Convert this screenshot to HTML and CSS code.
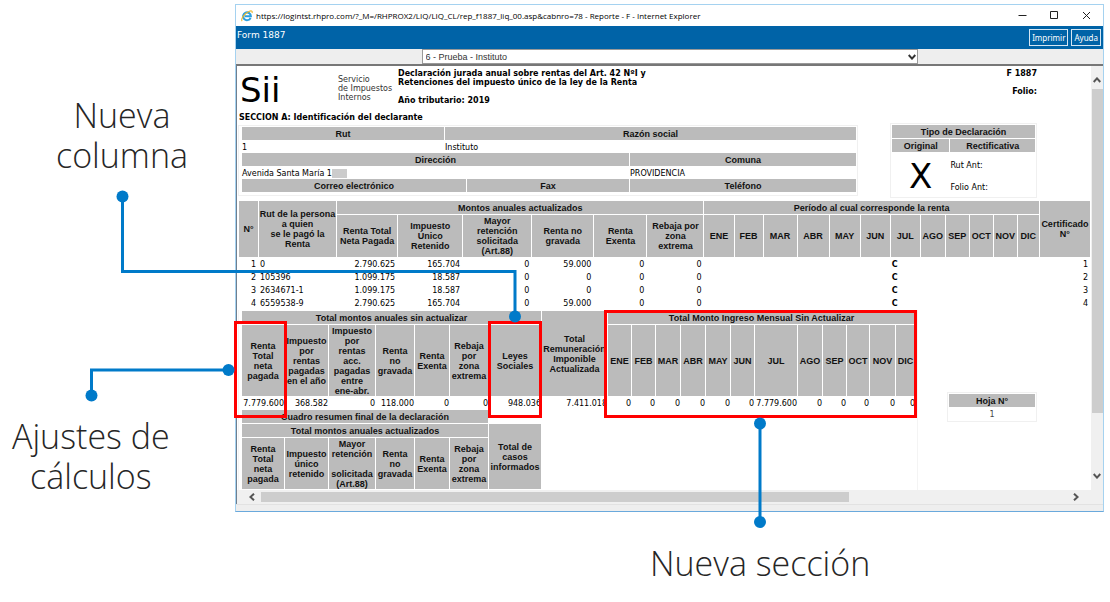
FILE: index.html
```
<!DOCTYPE html>
<html lang="es">
<head>
<meta charset="utf-8">
<title>Form 1887 - Reporte</title>
<link rel="stylesheet" href="styles.css">
</head>
<body>
<main class="stage">
  <section class="window">
    <header class="titlebar">
      <svg class="ie" viewBox="0 0 12 12" aria-hidden="true">
        <path d="M9.6 7.8A3.9 3.9 0 1 1 9.9 6.3H3.6" fill="none" stroke="#2b9fe0" stroke-width="2"/>
        <path d="M1.2 11C-.6 9.600 3.200 3.400 8.400 1.300 10.600.4 11.700 1.100 11 3" fill="none" stroke="#e8b62c" stroke-width="1.100"/>
      </svg>
      <h1 class="titlebar-text">https://logintst.rhpro.com/?_M=/RHPROX2/LIQ/LIQ_CL/rep_f1887_liq_00.asp&amp;cabnro=78 - Reporte - F - Internet Explorer</h1>
      <div class="controls">
        <button type="button" aria-label="Minimizar"><svg viewBox="0 0 9 9"><path d="M.5 4.500h8"/></svg></button>
        <button type="button" aria-label="Maximizar"><svg viewBox="0 0 9 9"><path d="M.5.5h7v7h-7z"/></svg></button>
        <button type="button" aria-label="Cerrar"><svg viewBox="0 0 9 9"><path d="M1 1l7 7M8 1L1 8"/></svg></button>
      </div>
    </header>
    <div class="toolbar">
      <span class="toolbar-title">Form 1887</span>
      <button type="button">Imprimir</button>
      <button type="button">Ayuda</button>
    </div>
    <div class="picker">
      <div class="select-wrap">
        <select aria-label="Empresa"><option>6 - Prueba - Instituto</option></select>
        <svg viewBox="0 0 8 6" aria-hidden="true"><path d="M.7 1L4 4.600 7.300 1"/></svg>
      </div>
    </div>
    <div class="frame">
      <div class="report">
        <div class="head">
          <div class="logo">Sii</div>
          <p class="agency">Servicio<br>de Impuestos<br>Internos</p>
          <p class="head-title">Declaración jurada anual sobre rentas del Art. 42 NºI y<br>Retenciones del impuesto único de la ley de la Renta<br><br>Año tributario: 2019</p>
          <p class="folio">F 1887<br><br>Folio:</p>
        </div>
        <h2 class="section-title">SECCION A: Identificación del declarante</h2>
        <div class="identity">
          <div class="panel panel-id">
            <table class="grid id-table">
              <colgroup><col class="i1"><col class="i2"><col class="i3"><col class="i4"></colgroup>
              <tr><th>Rut</th><th colspan="3">Razón social</th></tr>
              <tr><td>1</td><td colspan="3">Instituto</td></tr>
              <tr><th colspan="3">Dirección</th><th>Comuna</th></tr>
              <tr><td colspan="3">Avenida Santa María 1<span class="masked"></span></td><td>PROVIDENCIA</td></tr>
              <tr><th colspan="2">Correo electrónico</th><th>Fax</th><th>Teléfono</th></tr>
            </table>
          </div>
          <div class="panel panel-type">
            <table class="grid type-table">
              <colgroup><col class="t1"><col class="t2"></colgroup>
              <tr><th colspan="2">Tipo de Declaración</th></tr>
              <tr><th>Original</th><th>Rectificativa</th></tr>
              <tr><td rowspan="2" class="mark">X</td><td>Rut Ant:</td></tr>
              <tr><td>Folio Ant:</td></tr>
            </table>
          </div>
        </div>
        <table class="grid detail">
          <colgroup><col class="w19"><col class="w77"><col class="w60"><col class="w64"><col class="w68"><col class="w61"><col class="w52"><col class="w56"><col class="w29"><col class="w28"><col class="w33"><col class="w31"><col class="w30"><col class="w29"><col class="w29"><col class="w24"><col class="w23"><col class="w23"><col class="w23"><col class="w21"><col class="w50"></colgroup>
          <thead>
            <tr><th rowspan="2">N°</th><th rowspan="2">Rut de la persona<br>a quien<br>se le pagó la<br>Renta</th><th colspan="6">Montos anuales actualizados</th><th colspan="12">Período al cual corresponde la renta</th><th rowspan="2">Certificado<br>N°</th></tr>
            <tr class="tall"><th>Renta Total<br>Neta Pagada</th><th>Impuesto<br>Único<br>Retenido</th><th>Mayor<br>retención<br>solicitada<br>(Art.88)</th><th>Renta no<br>gravada</th><th>Renta<br>Exenta</th><th>Rebaja por<br>zona<br>extrema</th><th>ENE</th><th>FEB</th><th>MAR</th><th>ABR</th><th>MAY</th><th>JUN</th><th>JUL</th><th>AGO</th><th>SEP</th><th>OCT</th><th>NOV</th><th>DIC</th></tr>
          </thead>
          <tbody>
            <tr><td>1</td><td class="l">0</td><td>2.790.625</td><td>165.704</td><td>0</td><td>59.000</td><td>0</td><td>0</td><td></td><td></td><td></td><td></td><td></td><td></td><td class="l flag">C</td><td></td><td></td><td></td><td></td><td></td><td>1</td></tr>
            <tr><td>2</td><td class="l">105396</td><td>1.099.175</td><td>18.587</td><td>0</td><td>0</td><td>0</td><td>0</td><td></td><td></td><td></td><td></td><td></td><td></td><td class="l flag">C</td><td></td><td></td><td></td><td></td><td></td><td>2</td></tr>
            <tr><td>3</td><td class="l">2634671-1</td><td>1.099.175</td><td>18.587</td><td>0</td><td>0</td><td>0</td><td>0</td><td></td><td></td><td></td><td></td><td></td><td></td><td class="l flag">C</td><td></td><td></td><td></td><td></td><td></td><td>3</td></tr>
            <tr><td>4</td><td class="l">6559538-9</td><td>2.790.625</td><td>165.704</td><td>0</td><td>59.000</td><td>0</td><td>0</td><td></td><td></td><td></td><td></td><td></td><td></td><td class="l flag">C</td><td></td><td></td><td></td><td></td><td></td><td>4</td></tr>
          </tbody>
        </table>
        <div class="summary">
          <div class="totals-panel">
            <table class="grid totals">
              <colgroup><col class="w42"><col class="w43"><col class="w46"><col class="w38"><col class="w34"><col class="w38"><col class="w52"><col class="w65"><col class="w23"><col class="w23"><col class="w24"><col class="w24"><col class="w24"><col class="w23"><col class="w42"><col class="w24"><col class="w23"><col class="w22"><col class="w25"><col class="w19"></colgroup>
              <tr><th colspan="7">Total montos anuales sin actualizar</th><th rowspan="2">Total<br>Remuneración<br>Imponible<br>Actualizada</th><th colspan="12">Total Monto Ingreso Mensual Sin Actualizar</th></tr>
              <tr class="tall"><th>Renta<br>Total<br>neta<br>pagada</th><th>Impuesto<br>por<br>rentas<br>pagadas<br>en el año</th><th>Impuesto<br>por<br>rentas<br>acc.<br>pagadas<br>entre<br>ene-abr.</th><th>Renta<br>no<br>gravada</th><th>Renta<br>Exenta</th><th>Rebaja<br>por<br>zona<br>extrema</th><th>Leyes<br>Sociales</th><th>ENE</th><th>FEB</th><th>MAR</th><th>ABR</th><th>MAY</th><th>JUN</th><th>JUL</th><th>AGO</th><th>SEP</th><th>OCT</th><th>NOV</th><th>DIC</th></tr>
              <tr><td>7.779.600</td><td>368.582</td><td>0</td><td>118.000</td><td>0</td><td>0</td><td>948.036</td><td>7.411.018</td><td>0</td><td>0</td><td>0</td><td>0</td><td>0</td><td>0</td><td>7.779.600</td><td>0</td><td>0</td><td>0</td><td>0</td><td>0</td></tr>
              <tr><th colspan="6">Cuadro resumen final de la declaración</th></tr>
              <tr><th colspan="6">Total montos anuales actualizados</th><th rowspan="2">Total de<br>casos<br>informados</th></tr>
              <tr class="mid"><th>Renta<br>Total<br>neta<br>pagada</th><th>Impuesto<br>único<br>retenido</th><th>Mayor<br>retención<br><br>solicitada<br>(Art.88)</th><th>Renta<br>no<br>gravada</th><th>Renta<br>Exenta</th><th>Rebaja<br>por<br>zona<br>extrema</th></tr>
            </table>
          </div>
          <div class="panel panel-sheet">
            <table class="grid sheet"><tr><th>Hoja N°</th></tr><tr><td>1</td></tr></table>
          </div>
        </div>
      </div>
      <div class="vscroll">
        <svg viewBox="0 0 8 6" aria-hidden="true"><path d="M.7 5L4 1.400 7.300 5"/></svg>
        <div class="vthumb"></div>
        <svg viewBox="0 0 8 6" aria-hidden="true"><path d="M.7 1L4 4.600 7.300 1"/></svg>
      </div>
      <div class="hscroll">
        <svg viewBox="0 0 6 8" aria-hidden="true"><path d="M5 .7L1.400 4 5 7.300"/></svg>
        <div class="htrack"><div class="hthumb"></div></div>
        <svg viewBox="0 0 6 8" aria-hidden="true"><path d="M1 .7L4.600 4 1 7.300"/></svg>
      </div>
    </div>
    <div class="statusbar"></div>
  </section>

  <div class="mark-box box-pay"></div>
  <div class="mark-box box-laws"></div>
  <div class="mark-box box-months"></div>
  <svg class="connectors" width="1110" height="602" aria-hidden="true">
    <g fill="none" stroke="#007ac9" stroke-width="3"><path d="M122.500 196V271.500H515V316"/><path d="M228 370H91.500V396"/><path d="M760 423V522"/></g>
    <g fill="#007ac9"><circle cx="122.500" cy="196.500" r="6"/><circle cx="515" cy="316.500" r="6"/><circle cx="228.500" cy="370" r="6"/><circle cx="91.500" cy="395.500" r="6"/><circle cx="760" cy="423.500" r="6"/><circle cx="760" cy="522" r="6"/></g>
  </svg>
  <p class="caption cap-column">Nueva<br>columna</p>
  <p class="caption cap-calc">Ajustes de<br>cálculos</p>
  <p class="caption cap-section">Nueva sección</p>
</main>
</body>
</html>
```

FILE: styles.css
```
* { box-sizing: border-box; }
body { margin: 0; background: #fff; color: #000; font-family: "DejaVu Sans", sans-serif; font-size: 8px; }
p, h1, h2 { margin: 0; font-size: inherit; }
button { margin: 0; padding: 0; background: none; border: 0; color: inherit; }

.stage { position: relative; min-height: 602px; padding: 4px 6px 0 235px; }
.window { border: 1px solid #a5d2f0; border-bottom-color: #6aa9dc; }

.titlebar { display: flex; align-items: center; gap: 3px; height: 21px; padding: 0 12px 0 5px; }
.ie { width: 12px; height: 12px; }
.titlebar-text { flex: 1; font: 400 8px "Open Sans", sans-serif; white-space: nowrap; }
.controls { display: flex; gap: 23px; }
.controls button { display: flex; }
.controls svg { width: 9px; height: 9px; fill: none; stroke: #222; stroke-width: 1; }

.toolbar { display: flex; align-items: center; gap: 3px; height: 23px; padding: 0 2px 0 1px; background: #0063a7; color: #fff; }
.toolbar-title { flex: 1; align-self: flex-start; padding-top: 3px; font-size: 9px; line-height: 12px; }
.toolbar button { height: 17px; padding: 0 2px; border: 1px solid #d5e6f3; font: 8px "Noto Sans", sans-serif; }

.picker { display: flex; justify-content: center; height: 15px; background: #eee; }
.select-wrap { display: grid; width: 496px; align-items: center; }
.select-wrap > * { grid-area: 1 / 1; }
.select-wrap select { width: 100%; height: 15px; padding: 0 3px; appearance: none; background: #fff; border: 1px solid #999; border-radius: 0; color: #333; font: 9px "Liberation Sans", sans-serif; }
.select-wrap svg { justify-self: end; width: 8px; height: 6px; margin-right: 2px; fill: none; stroke: #333; stroke-width: 2; pointer-events: none; }

.frame { display: grid; grid-template-columns: minmax(0, 1fr) 12px; border-top: 2px solid #777; border-left: 1px solid #6f7f90; background: #f0f0f0; }
.report { overflow: hidden; padding: 3px 0 0 1px; background: #fff; }
.vscroll { display: flex; flex-direction: column; align-items: center; padding: 11px 0; }
.vscroll svg { width: 8px; height: 6px; }
.vscroll svg:last-child { margin-top: auto; }
.vthumb { width: 11px; height: 324px; margin-top: 6px; background: #cdcdcd; }
.vscroll svg, .hscroll svg { fill: none; stroke: #555; stroke-width: 2; }
.hscroll { display: flex; align-items: center; gap: 6px; height: 14px; padding: 0 12px; }
.hscroll svg { width: 6px; height: 8px; }
.htrack { flex: 1; }
.hthumb { width: 73%; height: 10px; background: #cdcdcd; }
.statusbar { height: 7px; background: #eee; border-top: 1px solid #e2e2e2; }

.head { display: grid; grid-template-columns: 96px 57px 1fr auto; gap: 0 3px; padding: 0 54px 0 1px; line-height: 9px; }
.logo { padding: 4px 0 0 1px; font-size: 34px; line-height: 34px; }
.agency { padding-top: 6px; white-space: nowrap; color: #333; }
.head-title, .section-title, .folio { font-weight: 700; }
.folio { text-align: right; }
.section-title { margin-top: 5px; padding-left: 1px; line-height: 11px; }

.identity { display: flex; align-items: flex-start; justify-content: space-between; padding: 0 54px 2px 0; }
.panel { border: 1px solid #f0f0f0; }
.panel-id { width: 620px; margin-top: 2px; padding: 0 1px 2px 2px; }
.panel-type { width: 147px; }

.grid { table-layout: fixed; border-collapse: separate; border-spacing: 1px; width: 100%; }
.grid th, .grid td { padding: 0; white-space: nowrap; }
.grid th { height: 13px; background: #bbb; color: #111; font: 700 9px/10px "Liberation Sans", sans-serif; }
.grid td { height: 12px; line-height: 9px; }

.id-table .i1 { width: 202px; }
.id-table .i2 { width: 21px; }
.id-table .i3 { width: 162px; }
.id-table .i4 { width: 226px; }
.id-table td { height: 11px; padding-top: 2px; text-align: left; }
.masked { display: inline-block; width: 15px; height: 9px; background: #ccc; vertical-align: top; }

.type-table .t1 { width: 57px; }
.type-table .t2 { width: 84px; }
.type-table td { height: 21px; padding-top: 3px; }
.type-table .mark { font-size: 34px; line-height: 39px; text-align: center; }

.detail .tall th { height: 42px; }
.detail td { text-align: right; padding: 0 2px 0 1px; }
.detail .l { text-align: left; }
.detail .flag { font-weight: 700; }

.summary { display: flex; align-items: flex-start; gap: 29px; }
.totals-panel { width: 680px; padding-left: 2px; border: 1px solid #f4f4f4; border-width: 0 1px; }
.totals { width: 675px; }
.totals .tall th { height: 71px; }
.totals .mid th { height: 51px; }
.totals td { text-align: right; }
.panel-sheet { width: 90px; margin-top: 82px; }
.sheet td { height: 12px; text-align: center; color: #444; }

.w19 { width: 19px; } .w21 { width: 21px; } .w22 { width: 22px; } .w23 { width: 23px; }
.w24 { width: 24px; } .w25 { width: 25px; } .w28 { width: 28px; } .w29 { width: 29px; }
.w30 { width: 30px; } .w31 { width: 31px; } .w33 { width: 33px; } .w34 { width: 34px; }
.w38 { width: 38px; } .w42 { width: 42px; } .w43 { width: 43px; } .w46 { width: 46px; }
.w50 { width: 50px; } .w52 { width: 52px; } .w56 { width: 56px; } .w60 { width: 60px; }
.w61 { width: 61px; } .w64 { width: 64px; } .w65 { width: 65px; } .w68 { width: 68px; }
.w77 { width: 77px; }

.mark-box { position: absolute; border: 3px solid #f00; }
.box-pay { left: 234px; top: 321px; width: 53px; height: 97px; }
.box-laws { left: 488px; top: 321px; width: 54px; height: 97px; }
.box-months { left: 604px; top: 310px; width: 313px; height: 108px; }
.connectors { position: absolute; left: 0; top: 0; pointer-events: none; }
.caption { position: absolute; color: #262626; font: 300 34px/40px "Open Sans", sans-serif; text-align: center; white-space: nowrap; }
.cap-column { left: 56px; top: 95px; }
.cap-calc { left: 12px; top: 416px; }
.cap-section { left: 650px; top: 543px; }
```
